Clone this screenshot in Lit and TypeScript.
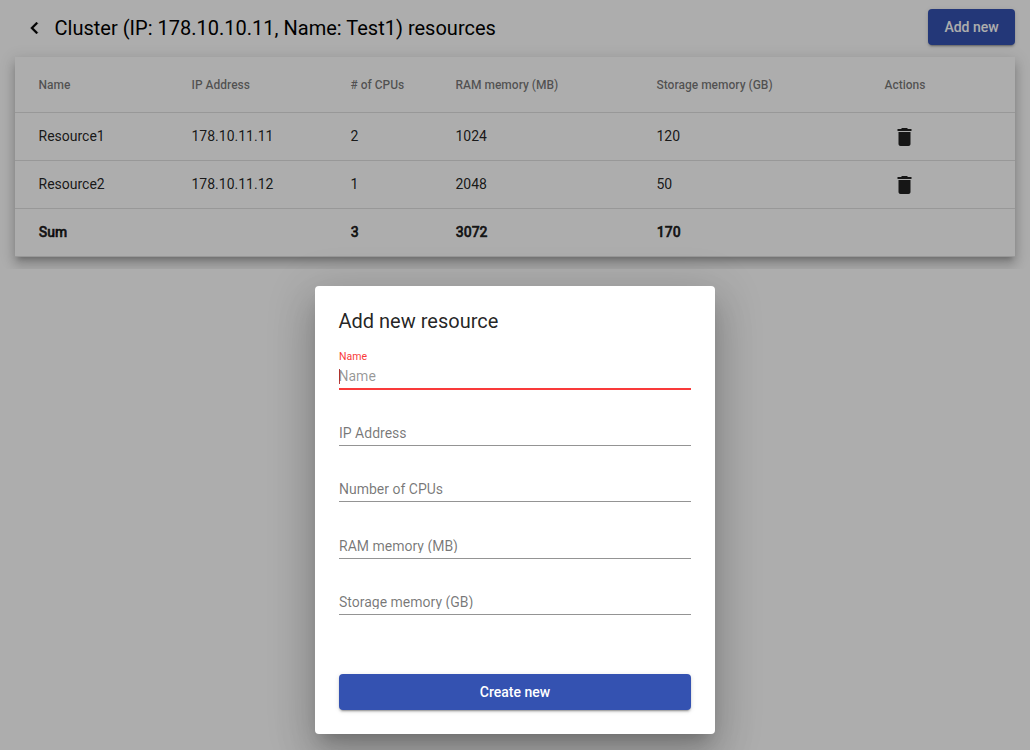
import { LitElement, html, css } from "lit";
import { customElement } from "lit/decorators.js";

interface Resource { name: string; ip: string; cpus: number; ram: number; storage: number; }

const resources: Resource[] = [
  { name: "Resource1", ip: "178.10.11.11", cpus: 2, ram: 1024, storage: 120 },
  { name: "Resource2", ip: "178.10.11.12", cpus: 1, ram: 2048, storage: 50 },
];
const fields = ["IP Address", "Number of CPUs", "RAM memory (MB)", "Storage memory (GB)"];

@customElement("app-root")
export class AppRoot extends LitElement {
  static styles = css`
    :host { display: block; position: relative; height: 750px; overflow: hidden; background: #fff; font-family: Roboto, sans-serif; color: rgba(0,0,0,.87); }
    * { box-sizing: border-box; }
    .page { height: 269px; padding: 9px 15px 0; background: #fff; overflow: hidden; }
    .bar { display: flex; align-items: center; height: 36px; }
    .back { width: 24px; height: 24px; margin: 2px 0 0 7px; fill: #000; stroke: #000; stroke-width: .3; }
    h1 { flex: 1; margin: 2px 0 0 8.5px; font-size: 20px; line-height: 32px; font-weight: 400; letter-spacing: .01px; color: #000; }
    .btn { height: 36px; padding: 0 16px; border: 0; border-radius: 4px; background: #3452b1; color: #fff; font: 500 14px/36px Roboto, sans-serif; box-shadow: 0 3px 1px -2px rgba(0,0,0,.2), 0 2px 2px rgba(0,0,0,.14), 0 1px 5px rgba(0,0,0,.12); }
    .add { width: 87px; padding: 0 15px; }
    .table { margin-top: 12px; background: #fff; box-shadow: 0 5px 5px -3px rgba(0,0,0,.2), 0 8px 10px 1px rgba(0,0,0,.14), 0 3px 14px 2px rgba(0,0,0,.12); }
    .row { display: grid; grid-template-columns: 153px 159px 105px 201px 228px 1fr; align-items: center; height: 48px; padding: 0 24px 0 23.5px; border-bottom: 1px solid rgba(0,0,0,.12); font-size: 14px; line-height: 16px; }
    .row:not(.head) span { margin-bottom: 2px; }
    .head { height: 56px; font-size: 12px; font-weight: 500; color: rgba(0,0,0,.54); }
    .row.sum { padding-left: 23.75px; font-weight: 500; -webkit-text-stroke: .5px rgba(0,0,0,.87); }
    .trash { display: block; width: 24px; height: 24px; margin-left: 8px; fill: rgba(0,0,0,.87); }
    .backdrop { position: absolute; inset: 0; background: rgba(0,0,0,.32); }
    .dialog { position: absolute; left: 315px; top: 286px; width: 400px; height: 448px; padding: 24px; display: flex; flex-direction: column; border-radius: 4px; background: #fff; box-shadow: 0 11px 15px -7px rgba(0,0,0,.2), 0 24px 38px 3px rgba(0,0,0,.14), 0 9px 46px 8px rgba(0,0,0,.12); }
    h2 { margin: -5px 0 0 -.5px; font-size: 20px; line-height: 32px; font-weight: 400; }
    .form { display: flex; flex-direction: column; height: 337px; }
    .field { display: flex; flex-direction: column; justify-content: flex-end; height: 56px; border-bottom: 1px solid rgba(0,0,0,.42); font-size: 14px; line-height: 16px; color: rgba(0,0,0,.54); padding-bottom: 4px; flex: none; }
    .field:nth-child(4) { height: 57px; }
    .placeholder { clip-path: inset(0 0 1px); }
    .field.active { height: 53px; border-bottom: 2px solid #f93a3a; color: rgba(0,0,0,.42); }
    .label { font-size: 10.5px; line-height: 12px; margin-bottom: 5px; color: #f93a3a; }
    .input { display: flex; align-items: center; }
    .value { margin-left: -.5px; }
    .caret { width: 1px; height: 15px; margin-right: -1px; background: #b43c3c; }
    .create { flex: none; width: 100%; }
  `;

  render() {
    const sum = (key: "cpus" | "ram" | "storage") => resources.reduce((n, r) => n + r[key], 0);
    return html`
      <main class="page">
        <header class="bar">
          <svg class="back" viewBox="0 0 24 24"><path transform="translate(.5 0)" d="M15.41 7.41 14 6l-6 6 6 6 1.41-1.41L10.83 12z"/></svg>
          <h1>Cluster (IP: 178.10.10.11, Name: Test1) resources</h1>
          <button class="btn add">Add new</button>
        </header>
        <section class="table">
          <div class="row head"><span>Name</span><span>IP Address</span><span># of CPUs</span><span>RAM memory (MB)</span><span>Storage memory (GB)</span><span>Actions</span></div>
          ${resources.map(r => html`<div class="row"><span>${r.name}</span><span>${r.ip}</span><span>${r.cpus}</span><span>${r.ram}</span><span>${r.storage}</span>
            <svg class="trash" viewBox="0 0 24 24"><path transform="translate(-.5 0)" d="M6 19c0 1.1.9 2 2 2h8c1.1 0 2-.9 2-2V7H6v12zM19 4h-3.5l-1-1h-5l-1 1H5v2h14V4z"/></svg></div>`)}
          <div class="row sum"><span>Sum</span><span></span><span>${sum("cpus")}</span><span>${sum("ram")}</span><span>${sum("storage")}</span><span></span></div>
        </section>
      </main>
      <div class="backdrop"></div>
      <section class="dialog" role="dialog">
        <h2>Add new resource</h2>
        <div class="form">
          <div class="field active"><span class="label">Name</span><span class="input"><i class="caret"></i><span class="value">Name</span></span></div>
          ${fields.map(f => html`<div class="field"><span class="placeholder">${f}</span></div>`)}
        </div>
        <button class="btn create">Create new</button>
      </section>`;
  }
}
